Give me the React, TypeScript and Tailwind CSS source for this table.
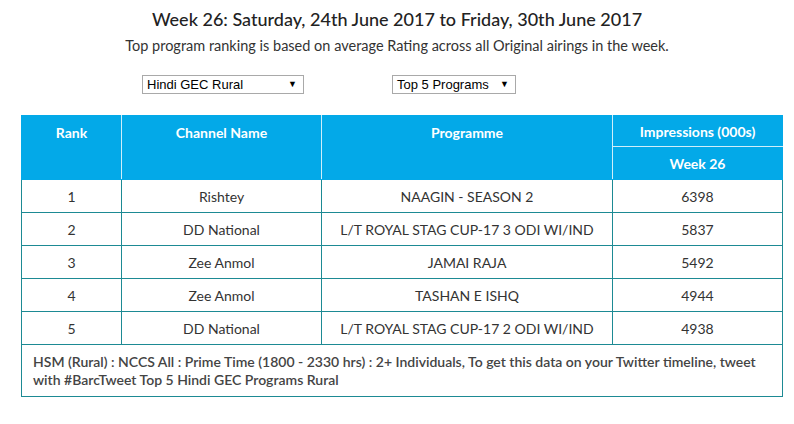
import React from "react";

const rows = [
  { rank: 1, channel: "Rishtey", programme: "NAAGIN - SEASON 2", imp: "6398" },
  { rank: 2, channel: "DD National", programme: "L/T ROYAL STAG CUP-17 3 ODI WI/IND", imp: "5837" },
  { rank: 3, channel: "Zee Anmol", programme: "JAMAI RAJA", imp: "5492" },
  { rank: 4, channel: "Zee Anmol", programme: "TASHAN E ISHQ", imp: "4944" },
  { rank: 5, channel: "DD National", programme: "L/T ROYAL STAG CUP-17 2 ODI WI/IND", imp: "4938" },
];

export default function App() {
  return (
    <div className="w-[794px] h-[424px] bg-white font-['Lato',sans-serif] text-[#333]">
      <h1 className="pt-[6px] text-center text-[18px] leading-[26px] font-medium text-[#222]">
        Week 26: Saturday, 24th June 2017 to Friday, 30th June 2017
      </h1>
      <p className="mt-[4px] text-center text-[14.5px] leading-[20px] text-[#333]">
        Top program ranking is based on average Rating across all Original airings in the week.
      </p>

      {/* filters */}
      <div className="mt-[19px] flex pl-[142px] gap-[88px] font-['Liberation_Sans',Arial,sans-serif] text-[13px] text-black">
        <div className="w-[162px] h-[19px] border border-[#a9a9a9] flex items-center justify-between pl-[4px] pr-[6px]">
          <span>Hindi GEC Rural</span>
          <span className="text-[9px]">▼</span>
        </div>
        <div className="w-[124px] h-[19px] border border-[#a9a9a9] flex items-center justify-between pl-[4px] pr-[6px]">
          <span>Top 5 Programs</span>
          <span className="text-[9px]">▼</span>
        </div>
      </div>

      <table className="mt-[21px] ml-[21px] w-[761px] border-collapse text-[14px] table-fixed">
        <colgroup>
          <col className="w-[100px]" />
          <col className="w-[200px]" />
          <col className="w-[291px]" />
          <col className="w-[170px]" />
        </colgroup>
        <thead className="bg-[#03a9e8] text-white font-bold">
          <tr className="h-[31px]">
            <th rowSpan={2} className="align-top pt-[6px] border border-[#03a9e8] border-r-[#cfeefa]">Rank</th>
            <th rowSpan={2} className="align-top pt-[6px] border border-[#03a9e8] border-r-[#cfeefa]">Channel Name</th>
            <th rowSpan={2} className="align-top pt-[6px] border border-[#03a9e8] border-r-[#cfeefa]">Programme</th>
            <th className="border border-[#03a9e8] border-b-[#cfeefa]">Impressions (000s)</th>
          </tr>
          <tr className="h-[33px]">
            <th className="border border-[#03a9e8]">Week 26</th>
          </tr>
        </thead>
        <tbody>
          {rows.map((r) => (
            <tr key={r.rank} className="h-[33px] text-center">
              <td className="border border-[#1d8a94]">{r.rank}</td>
              <td className="border border-[#1d8a94]">{r.channel}</td>
              <td className="border border-[#1d8a94]">{r.programme}</td>
              <td className="border border-[#1d8a94]">{r.imp}</td>
            </tr>
          ))}
          <tr className="h-[52px]">
            <td colSpan={4} className="border border-[#1d8a94] pl-[11px] pr-[8px] py-[6px] text-[14px] leading-[18px] font-semibold text-[#444]">
              HSM (Rural) : NCCS All : Prime Time (1800 - 2330 hrs) : 2+ Individuals, To get this data on your Twitter timeline, tweet with #BarcTweet Top 5 Hindi GEC Programs Rural
            </td>
          </tr>
        </tbody>
      </table>
    </div>
  );
}
